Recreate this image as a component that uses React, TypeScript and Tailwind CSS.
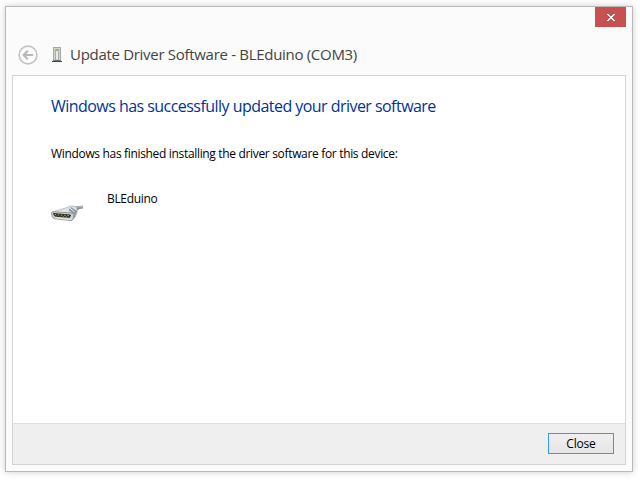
import React from "react";

function BackIcon() {
  return (
    <svg width="20" height="20" viewBox="0 0 20 20" fill="none" className="shrink-0">
      <circle cx="10" cy="10" r="8.9" stroke="#c3c3c3" strokeWidth="1.6" />
      <path d="M15.2 10H6M9.8 5.8L5.6 10L9.8 14.2" stroke="#b9b9b9" strokeWidth="2.1" />
    </svg>
  );
}

function DeviceIcon() {
  return (
    <svg width="10" height="16" viewBox="0 0 10 16" className="shrink-0">
      <rect x="1.5" y="0.5" width="7" height="13" fill="#d3d3d3" stroke="#a6a6a6" />
      <path d="M3 13V2H7V13Z" fill="#a9aeab" />
      <path d="M4 12.5V4H6V12.5Z" fill="#e9ebea" />
      <rect x="4" y="2" width="2" height="2" fill="#7fc832" />
      <path d="M1 13.5H9" stroke="#777" />
      <path d="M0 14.5H10" stroke="#444" />
    </svg>
  );
}

function ConnectorIcon() {
  return (
    <svg width="32" height="18" viewBox="0 0 32 18" className="shrink-0">
      <defs>
        <linearGradient id="shell" x1="0" y1="0" x2="0.3" y2="1">
          <stop offset="0" stopColor="#b9c2c9" />
          <stop offset="0.45" stopColor="#e2e7ea" />
          <stop offset="1" stopColor="#7e888f" />
        </linearGradient>
      </defs>
      <path d="M21 4.5Q26 2.2 32 2.8V5.6Q28 5.6 25.5 8Z" fill="#83919b" />
      <path d="M25 4.5Q28 3.4 32 3.8" stroke="#b9c5cc" fill="none" />
      <path d="M1.5 8.8L13 5.4L20 3Q23.5 2.2 25.6 4.6L26.5 8.5L24.5 13.5L20.5 17.6L3 11Z" fill="url(#shell)" stroke="#a5afb6" strokeWidth=".6" />
      <path d="M17 6.5L20 4.2L26 8L24 12Z" fill="#87949e" />
      <path d="M15.5 8L18.5 4.8L23.5 9" stroke="#f3f6f8" strokeWidth="1" fill="none" />
      <path d="M.4 9.8Q.8 8.6 3 8.8L21 10Q23.2 10.4 23 12L22 16.2Q21.5 17.7 19.5 17.6L4 15.8Q1.6 15.3 1 13.3Z" fill="#c8ced2" stroke="#838c93" strokeWidth=".8" />
      <path d="M2 10.1L18.8 11.4Q20.2 11.7 19.8 12.6L18.8 14.8L4.5 13.7Q2.3 13.1 2 10.1Z" fill="#26261d" />
      <path d="M3.6 11.6L18.4 12.7" stroke="#d1bd4b" strokeWidth=".9" strokeDasharray="1.5 1.7" />
      <path d="M5.2 12.9L17.6 13.8" stroke="#b9a83e" strokeWidth=".6" strokeDasharray="1.5 1.7" />
      <path d="M4 14.8L19.5 16.6L21.3 15" stroke="#eef1f2" strokeWidth=".8" fill="none" />
    </svg>
  );
}

export default function App() {
  return (
    <div className="h-[480px] w-[640px] overflow-hidden bg-white pl-[5px] pt-[6px] font-['Open_Sans','Noto_Sans',sans-serif]">
      <div className="flex h-[466px] w-[628px] flex-col border border-[#b9b9b9] bg-[#fbfbfb] px-[6px] pb-[6px] shadow-[0_0_7px_rgba(0,0,0,0.2)]">
        <div className="flex h-5 shrink-0 justify-end">
          <button aria-label="Close window" className="flex h-5 w-[31px] items-center justify-center bg-[#c75050]">
            <svg width="8" height="7" viewBox="0 0 8 7" shapeRendering="crispEdges">
              <path d="M0 0h2v1h1v1h2V1h1V0h2v1H7v1H6v1H5v1h1v1h1v1h1v1H6V6H5V5H3v1H2v1H0V6h1V5h1V4h1V3H2V2H1V1H0z" fill="#fff" />
            </svg>
          </button>
        </div>
        <header className="flex h-12 shrink-0 items-center pl-[6px] pt-2">
          <BackIcon />
          <div className="ml-[14px] flex items-center">
            <DeviceIcon />
            <h1 className="mb-0.5 ml-2 whitespace-nowrap text-[15px] leading-5 tracking-[-0.3px] text-[#444]">Update Driver Software - BLEduino (COM3)</h1>
          </div>
        </header>
        <div className="flex h-[390px] flex-col border border-[#d4d4d4] bg-white">
          <main className="flex-1 pl-[38px] pt-[19px]">
            <h2 className="whitespace-nowrap text-[16px] leading-[22px] tracking-[-0.54px] text-[#003399]">Windows has successfully updated your driver software</h2>
            <p className="mt-7 whitespace-nowrap text-[12px] leading-[18px] tracking-[-0.33px] text-black">Windows has finished installing the driver software for this device:</p>
            <div className="mt-[27px] flex">
              <div className="pt-[13px]"><ConnectorIcon /></div>
              <span className="ml-6 text-[12px] leading-[18px] tracking-[-0.33px] text-black">BLEduino</span>
            </div>
          </main>
          <footer className="flex h-[41px] shrink-0 justify-end border-t border-[#dfdfdf] bg-[#efefef] pr-[11px] pt-[9px]">
            <button className="flex h-[21px] w-[66px] items-center justify-center border border-[#3399ff] bg-gradient-to-b from-[#f0f0f0] to-[#e5e5e5] text-[12px] leading-[18px] tracking-[-0.2px] text-black">Close</button>
          </footer>
        </div>
      </div>
    </div>
  );
}
